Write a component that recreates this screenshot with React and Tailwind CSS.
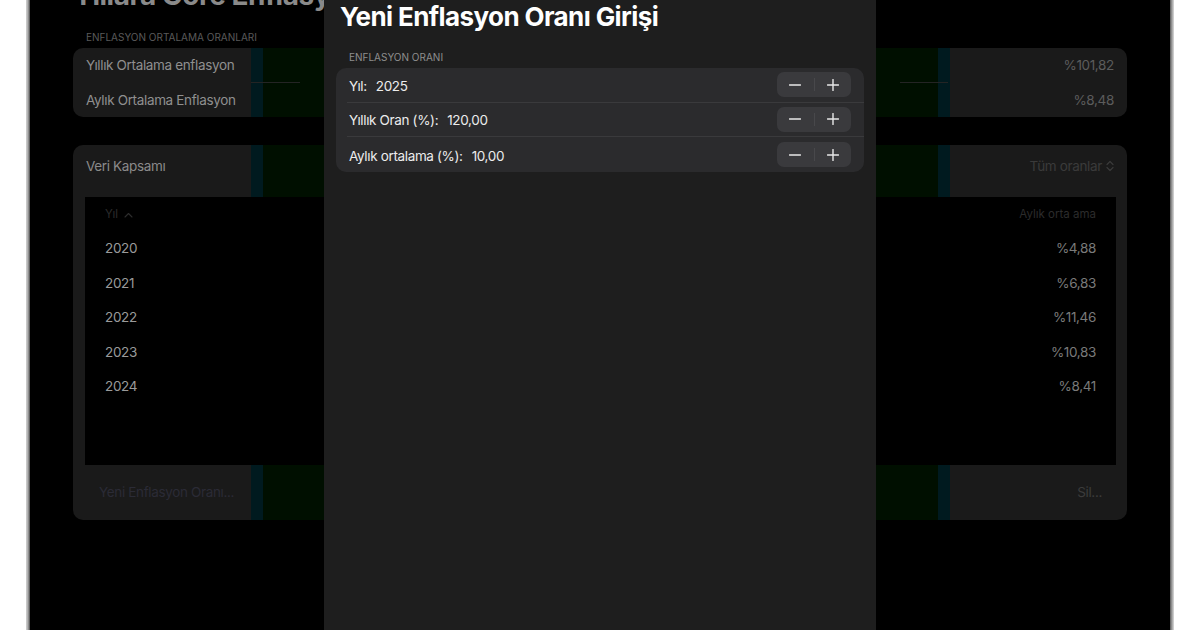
import React from "react";

function Stripes() {
  return (
    <>
      <div className="absolute top-0 bottom-0 left-[178px] w-[12px] bg-[#001a1f]" />
      <div className="absolute top-0 bottom-0 left-[190px] w-[61px] bg-[#000f00]" />
      <div className="absolute top-0 bottom-0 left-[803px] w-[62px] bg-[#000f00]" />
      <div className="absolute top-0 bottom-0 left-[865px] w-[12px] bg-[#001a1f]" />
    </>
  );
}

function Stepper() {
  return (
    <div className="flex items-center w-[74px] h-[25px] rounded-[7px] bg-[#3a3a3d]">
      <div className="flex-1 flex items-center justify-center">
        <svg width="12" height="12" viewBox="0 0 12 12">
          <path d="M0.5 6 H11.5" stroke="#e8e8e8" strokeWidth="1.4" strokeLinecap="round" />
        </svg>
      </div>
      <div className="w-px h-[13px] bg-[#48484b]" />
      <div className="flex-1 flex items-center justify-center">
        <svg width="12" height="12" viewBox="0 0 12 12">
          <path d="M0.5 6 H11.5 M6 0.5 V11.5" stroke="#e8e8e8" strokeWidth="1.4" strokeLinecap="round" />
        </svg>
      </div>
    </div>
  );
}

function FormRow({ label, value, last }) {
  return (
    <div className={"h-[34.67px] flex items-center pr-[13px] ml-[11px] pl-[2px] " + (last ? "" : "border-b border-[#3a3a3c]")}>
      <div className="flex-1 flex items-center gap-[9px] pt-[2px] text-[13.5px] tracking-[-0.35px] text-[#ececec]">
        <span>{label}</span>
        <span>{value}</span>
      </div>
      <Stepper />
    </div>
  );
}

const rows = [
  ["2020", "%4,88"],
  ["2021", "%6,83"],
  ["2022", "%11,46"],
  ["2023", "%10,83"],
  ["2024", "%8,41"],
];

export default function App() {
  return (
    <div className="w-[1200px] h-[630px] bg-white relative overflow-hidden font-['Inter',sans-serif]">
      <div className="ml-[26px] w-[1148px] h-full flex">
        <div className="w-[4px] h-full bg-gradient-to-r from-[#d4d4d4] via-[#a8a8a8] to-[#4a4a4a]" />
        <div className="w-[1140px] h-full bg-black px-[43px] flex flex-col">
          <div className="-mt-[19px] h-[30px] leading-none text-[28px] font-bold tracking-[-0.5px] text-[#8a8a8a] whitespace-nowrap">
            Yıllara Göre Enflasyon Oranları
          </div>
          <div className="mt-[20px] h-[12px] leading-[12px] px-[13px] text-[10px] uppercase text-[#5a5a5a]">
            Enflasyon Ortalama Oranları
          </div>
          <div className="mt-[5px] relative rounded-[10px] bg-[#1a1a1a] overflow-hidden">
            <Stripes />
            <div className="absolute left-[178px] w-[49px] top-[34px] h-px bg-[#242424]" />
            <div className="absolute left-[827px] w-[48px] top-[34px] h-px bg-[#242424]" />
            <div className="relative text-[13.5px] tracking-[-0.35px]">
              <div className="h-[34.5px] flex items-center justify-between px-[13px]">
                <span className="text-[#8f8f8f]">Yıllık Ortalama enflasyon</span>
                <span className="text-[#5c5c5c]">%101,82</span>
              </div>
              <div className="h-[34.5px] flex items-center justify-between px-[13px]">
                <span className="text-[#8f8f8f]">Aylık Ortalama Enflasyon</span>
                <span className="text-[#5c5c5c]">%8,48</span>
              </div>
            </div>
          </div>

          <div className="mt-[28px] relative rounded-[10px] bg-[#1a1a1a] overflow-hidden">
            <Stripes />
            <div className="relative text-[13.5px] tracking-[-0.35px]">
              <div className="h-[52px] flex items-start justify-between px-[13px] pt-[11px]">
                <span className="text-[#8a8a8a]">Veri Kapsamı</span>
                <span className="flex items-center gap-[4px] text-[#3a3a3a]">
                  Tüm oranlar
                  <svg width="8" height="12" viewBox="0 0 8 12">
                    <path d="M1 4.5 L4 1.5 L7 4.5 M1 7.5 L4 10.5 L7 7.5" stroke="#3a3a3a" strokeWidth="1.2" fill="none" strokeLinecap="round" strokeLinejoin="round" />
                  </svg>
                </span>
              </div>
              <div className="mx-[12px] mr-[11px] h-[268px] bg-black px-[20px] flex flex-col">
                <div className="h-[34px] pt-[2px] flex items-center justify-between text-[11.5px] tracking-normal text-[#2c2c2c]">
                  <span className="flex items-center gap-[6px]">
                    Yıl
                    <svg width="9" height="6" viewBox="0 0 9 6">
                      <path d="M1 5 L4.5 1.5 L8 5" stroke="#2c2c2c" strokeWidth="1.1" fill="none" strokeLinecap="round" strokeLinejoin="round" />
                    </svg>
                  </span>
                  <span>Aylık orta ama</span>
                </div>
                {rows.map(([y, v]) => (
                  <div key={y} className="h-[34.5px] flex items-center justify-between">
                    <span className="text-[#9a9a9a]">{y}</span>
                    <span className="text-[#7a7a7a]">{v}</span>
                  </div>
                ))}
              </div>
              <div className="h-[55px] flex items-center justify-between pl-[26px] pr-[25px]">
                <span className="text-[#2b2b36]">Yeni Enflasyon Oranı...</span>
                <span className="text-[#3c3c3c]">Sil...</span>
              </div>
            </div>
          </div>
        </div>
        <div className="w-[4px] h-full bg-gradient-to-r from-[#5a5a5a] via-[#a0a0a0] to-[#dcdcdc]" />
      </div>

      <div className="absolute left-[324px] top-0 w-[552px] h-[630px] bg-[#1e1e1e] flex flex-col">
        <div className="pl-[16px] h-[33px] flex items-center text-[26px] font-bold text-white leading-none tracking-[-0.6px]">
          Yeni Enflasyon Oranı Girişi
        </div>
        <div className="mt-[18px] h-[12px] leading-[12px] pl-[25px] text-[10px] uppercase text-[#8e8e8e]">
          ENFLASYON ORANI
        </div>
        <div className="mt-[5px] mx-[12px] rounded-[10px] bg-[#2b2b2d]">
          <FormRow label="Yıl:" value="2025" />
          <FormRow label="Yıllık Oran (%):" value="120,00" />
          <FormRow label="Aylık ortalama (%):" value="10,00" last />
        </div>
      </div>
    </div>
  );
}
